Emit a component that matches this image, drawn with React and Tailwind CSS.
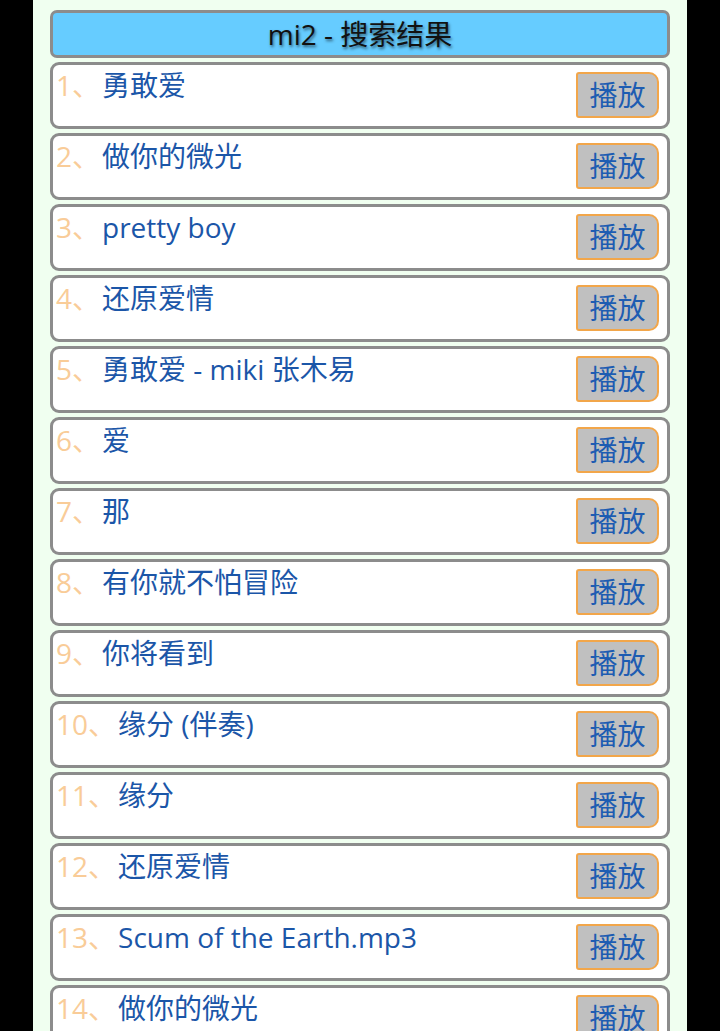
import React from 'react';

const songs = [
  '勇敢爱',
  '做你的微光',
  'pretty boy',
  '还原爱情',
  '勇敢爱 - miki 张木易',
  '爱',
  '那',
  '有你就不怕冒险',
  '你将看到',
  '缘分 (伴奏)',
  '缘分',
  '还原爱情',
  'Scum of the Earth.mp3',
  '做你的微光',
];

const font = { fontFamily: '"Open Sans", "Noto Sans CJK SC", sans-serif' };

const SongRow = ({ index, title }) => (
  <div className="h-[67px] flex justify-between border-[3px] border-[#8c8c8c] rounded-[9px] bg-white">
    <div className="pl-[3px] pt-[4px] text-[28px] leading-[32px] whitespace-nowrap">
      <span className="text-[#f9cc98]">{index}、</span>
      <span className="ml-[2px] text-[#1b56a8]">{title}</span>
    </div>
    <button className="mt-[7px] mr-[8px] w-[83px] h-[46px] bg-[#c0c0c0] border-2 border-[#f2a64a] rounded-l-[3px] rounded-r-[10px] text-[28px] leading-none text-[#1d5cb2]">
      播放
    </button>
  </div>
);

export default function App() {
  return (
    <div className="min-h-screen bg-black flex justify-center" style={font}>
      <div className="w-[654px] bg-[#f0fff0] px-[17px] pt-[10px] flex flex-col gap-[4px]">
        <div className="h-[48px] flex items-center justify-center border-[3px] border-[#8c8c8c] rounded-[7px] bg-[#66ccff] text-[28px] text-[#111] [text-shadow:1px_2px_3px_rgba(0,0,0,0.55)]">
          mi2 - 搜索结果
        </div>
        {songs.map((s, i) => (
          <SongRow key={i} index={i + 1} title={s} />
        ))}
      </div>
    </div>
  );
}
